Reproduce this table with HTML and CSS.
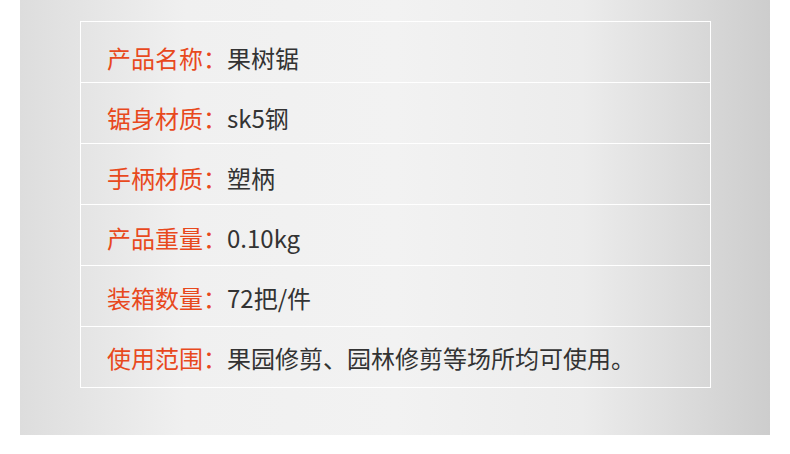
FILE: index.html
```html
<!DOCTYPE html>
<html lang="zh-CN">
<head>
    <meta charset="UTF-8">
    <meta name="viewport" content="width=device-width, initial-scale=1.0">
    <title>果树锯 产品参数</title>
    <link rel="stylesheet" href="styles.css">
</head>
<body>
    <div class="panel">
        <div class="spec-table">
            <div class="spec-row"><span class="label">产品名称：</span><span class="value">果树锯</span></div>
            <div class="spec-row"><span class="label">锯身材质：</span><span class="value">sk5钢</span></div>
            <div class="spec-row"><span class="label">手柄材质：</span><span class="value">塑柄</span></div>
            <div class="spec-row"><span class="label">产品重量：</span><span class="value">0.10kg</span></div>
            <div class="spec-row"><span class="label">装箱数量：</span><span class="value">72把/件</span></div>
            <div class="spec-row"><span class="label">使用范围：</span><span class="value">果园修剪、园林修剪等场所均可使用。</span></div>
        </div>
    </div>
</body>
</html>
```

FILE: styles.css
```css
body {
    margin: 0;
    padding: 0;
    background: #fff;
    font-family: "Noto Sans CJK SC", "Noto Sans", sans-serif;
}
.panel {
    margin: 0 20px;
    height: 435px;
    padding: 21px 0 0 60px;
    box-sizing: border-box;
    background: linear-gradient(to right, #dddddd 0%, #f0f0f0 22%, #f2f2f2 50%, #ececec 75%, #cdcdcd 100%);
}
.spec-table {
    width: 631px;
    height: 367px;
    box-sizing: border-box;
    border: 1px solid #fff;
    /* row dividers every 61px */
    background: repeating-linear-gradient(to bottom, transparent 0 60px, #fff 60px 61px);
}
.spec-row {
    height: 60px;
    padding: 12px 0 0 26px;
    box-sizing: border-box;
    font-size: 24px;
    line-height: 48px;
    white-space: nowrap;
}
.label {
    color: #e8491d;
}
.value {
    color: #333;
}
```
